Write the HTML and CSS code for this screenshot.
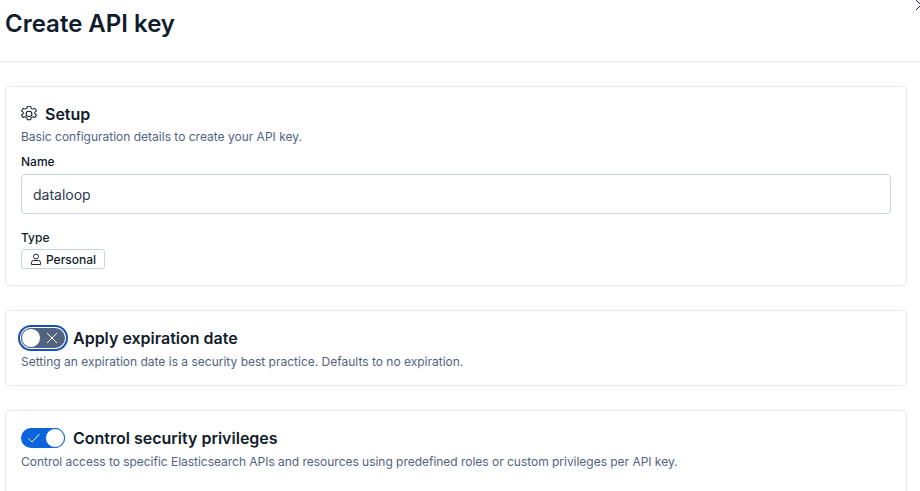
FILE: index.html
```html
<!DOCTYPE html>
<html lang="en">
<head>
<meta charset="utf-8">
<title>Create API key</title>
<link rel="stylesheet" href="styles.css">
</head>
<body>
<header class="header">
  <h1 class="title">Create API key</h1>
  <svg class="close" width="10" height="10" viewBox="0 0 10 10" aria-hidden="true"><path d="M0 0 L10 10 M10 0 L0 10" fill="none" stroke="#1d2a3e" stroke-width="1"/></svg>
</header>
<main class="content">
  <section class="panel setup">
    <div class="heading-row">
      <svg class="gear" width="16" height="16" viewBox="1.200 0.300 13.600 15.400" preserveAspectRatio="none" aria-hidden="true"><path d="M6.600 .6h2.800l.4 2 1.300.7 1.900-.7 1.400 2.400-1.500 1.300v1.400l1.500 1.300-1.400 2.400-1.900-.7-1.300.8-.4 2H6.600l-.4-2-1.300-.8-1.900.7-1.400-2.400 1.500-1.300V6.300L1.600 5l1.400-2.400 1.900.7 1.300-.7z" fill="none" stroke="#111c2c" stroke-width=".9" stroke-linejoin="round"/><circle cx="8" cy="7.900" r="2.500" fill="none" stroke="#111c2c" stroke-width=".9"/></svg>
      <h2 class="panel-title">Setup</h2>
    </div>
    <p class="desc">Basic configuration details to create your API key.</p>
    <label class="label name-label">Name</label>
    <div class="input">dataloop</div>
    <div class="label type-label">Type</div>
    <span class="badge">
      <svg width="12" height="12" viewBox="0 0 12 12" aria-hidden="true"><circle cx="6" cy="3.500" r="2.500" fill="none" stroke="#1d2a3e"/><path d="M1.500 11.500V9.500a2 2 0 0 1 2-2h5a2 2 0 0 1 2 2v2z" fill="none" stroke="#1d2a3e" stroke-linejoin="round"/></svg>
      Personal
    </span>
  </section>
  <section class="panel expiry">
    <div class="heading-row">
      <span class="switch-focus">
        <span class="switch off">
          <span class="knob"></span>
          <svg width="14" height="14" viewBox="0 0 14 14" aria-hidden="true"><path d="M2 2l10 10m0-10L2 12" stroke="#fff" fill="none"/></svg>
        </span>
      </span>
      <h2 class="panel-title">Apply expiration date</h2>
    </div>
    <p class="desc">Setting an expiration date is a security best practice. Defaults to no expiration.</p>
  </section>
  <section class="panel privileges">
    <div class="heading-row">
      <span class="switch on">
        <svg width="14" height="12" viewBox="0 0 14 12" aria-hidden="true"><path d="M1.500 6.500l3.500 3.500 7.500-8" stroke="#fff" fill="none"/></svg>
        <span class="knob"></span>
      </span>
      <h2 class="panel-title">Control security privileges</h2>
    </div>
    <p class="desc">Control access to specific Elasticsearch APIs and resources using predefined roles or custom privileges per API key.</p>
  </section>
</main>
</body>
</html>
```
FILE: styles.css
```css
* { box-sizing: border-box; }
html, body { margin: 0; height: 100%; overflow: hidden; }
body { background: #fff; color: #111c2c; font-family: Inter, "Liberation Sans", sans-serif; font-size: 14px; }
.header { height: 62px; border-bottom: 1px solid #e3e8f2; padding: 8px 0 0 5px; position: relative; }
.title { margin: 0; font-size: 24px; line-height: 32px; font-weight: 600; color: #111c2c; }
.close { position: absolute; right: -6px; top: 0; }
.content { padding: 24px 13px 0 5px; display: flex; flex-direction: column; gap: 24px; height: 429px; overflow: hidden; }
.panel { border: 1px solid #e3e8f2; border-radius: 4px; padding: 15px; background: #fff; flex: none; }
.setup { height: 200px; }
.expiry { height: 76px; }
.privileges { height: 120px; }
.heading-row { display: flex; align-items: center; gap: 8px; height: 24px; }
.panel-title { margin: 0; font-size: 16px; line-height: 24px; font-weight: 600; color: #111c2c; }
.desc { margin: 2px 0 0; font-size: 12px; line-height: 20px; color: #516381; }
.setup .desc { margin-top: 1px; }
.privileges .desc { letter-spacing: -0.025px; }
.label { font-size: 12px; line-height: 16px; font-weight: 500; color: #111c2c; }
.name-label { display: block; margin-top: 7px; }
.input { margin-top: 4px; height: 40px; border: 1px solid #cad3e2; border-radius: 4px; padding: 0 11px; display: flex; align-items: center; font-size: 14px; color: #2b394f; }
.type-label { margin-top: 16px; }
.badge { margin-top: 3px; display: inline-flex; align-items: center; gap: 4px; height: 20px; padding: 0 8px; border: 1px solid #cad3e2; border-radius: 3px; font-size: 12px; font-weight: 500; color: #111c2c; }
.switch { width: 44px; height: 20px; border-radius: 10px; display: inline-flex; align-items: center; justify-content: space-between; flex: none; }
.switch.off { background: #516381; padding: 0 6px 0 0; }
.switch.on { background: #0b64dd; padding: 0 0 0 6px; }
.knob { width: 20px; height: 20px; border-radius: 50%; background: #fff; border: 1px solid #0b64dd; flex: none; }
.switch.off .knob { border-color: #516381; }
.switch-focus { padding: 1px; border: 2px solid #1750ba; border-radius: 14px; display: inline-flex; flex: none; margin: 0 -3px; }
```
